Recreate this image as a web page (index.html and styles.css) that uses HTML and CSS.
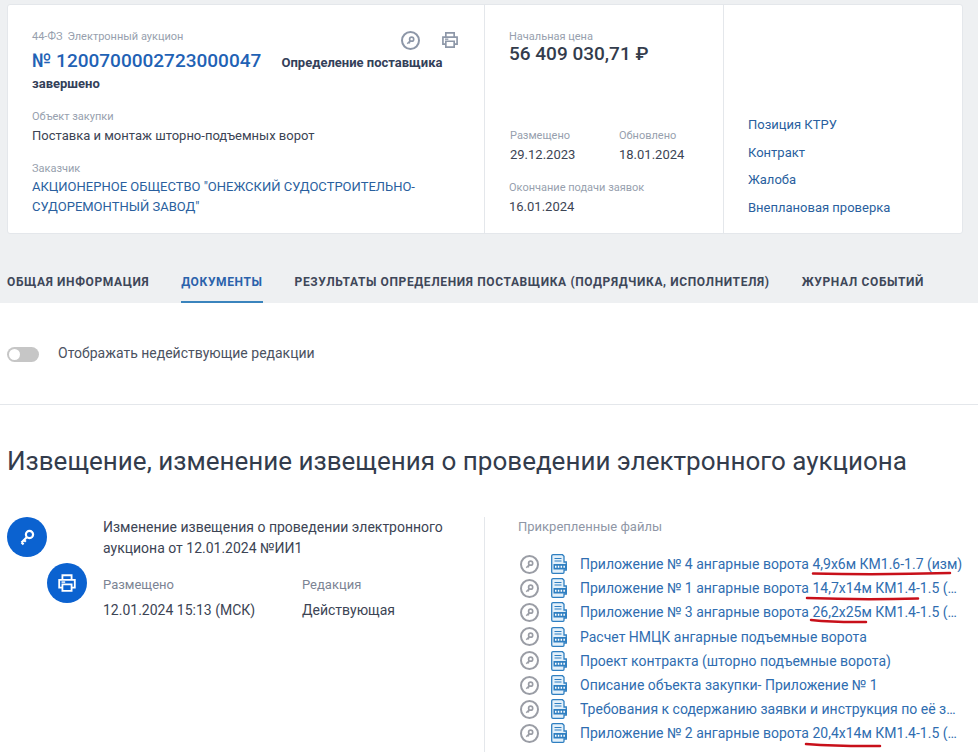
FILE: index.html
```html
<!DOCTYPE html>
<html>
<head>
  <title>Извещение</title>
  <link rel="stylesheet" href="styles.css">
</head>
<body>
  <svg width="0" height="0" class="defs">
    <symbol id="key" viewBox="0 0 24 24">
      <circle cx="14.500" cy="9.500" r="3.600" fill="none" stroke="currentColor" stroke-width="2.200"/>
      <path d="M12 12 L6.500 17.500 M6.500 17.500 L8.600 19.400 M9 15 L10.800 16.800" fill="none" stroke="currentColor" stroke-width="2.200"/>
    </symbol>
    <symbol id="key-bold" viewBox="0 0 24 24">
      <circle cx="14.500" cy="9" r="4.500" fill="none" stroke="currentColor" stroke-width="3.600"/>
      <path d="M11.500 12.500 L5 19 M8.500 15.500 L11 18" fill="none" stroke="currentColor" stroke-width="3.400"/>
    </symbol>
    <symbol id="printer" viewBox="0 0 24 24">
      <path d="M7 8V3.500h10V8M7 17H3.500V8.500h17V17H17M7 13.500h10v7H7z" fill="none" stroke="currentColor" stroke-width="2"/>
      <path d="M6 11h4" stroke="currentColor" stroke-width="1.600"/>
    </symbol>
    <symbol id="doc" viewBox="0 0 16 20">
      <path d="M2 .7h9.500L13 2.200V8h2.300v8H13v2.300a1 1 0 0 1-1 1H2a1.300 1.300 0 0 1-1.300-1.300V2A1.300 1.300 0 0 1 2 .7z" fill="#e3f0fa" stroke="#2f7fc1" stroke-width="1.300"/>
      <path d="M3.500 4.500h7M3.500 7h7" stroke="#2f7fc1" stroke-width="1.200"/>
      <rect x="2.500" y="10" width="13.500" height="5.500" fill="#2f7fc1"/>
      <path d="M4 12.800h1.500M6.800 12.800h1.500M9.600 12.800h1.500M12.400 12.800h1.500" stroke="#fff" stroke-width="2"/>
    </symbol>
  </svg>

  <div class="top">
    <div class="card">
      <div class="col-main">
        <div class="card-actions">
          <span class="round-key"><svg><use href="#key-bold"/></svg></span>
          <svg class="print-icon" width="20" height="20"><use href="#printer"/></svg>
        </div>
        <div class="small-label"><span class="law">44-ФЗ</span>Электронный аукцион</div>
        <div class="title-line">
          <a class="reg-number">№ 1200700002723000047</a>
          <b class="status">Определение поставщика завершено</b>
        </div>
        <div class="small-label object-label">Объект закупки</div>
        <div class="value">Поставка и монтаж шторно-подъемных ворот</div>
        <div class="small-label customer-label">Заказчик</div>
        <a class="customer">АКЦИОНЕРНОЕ ОБЩЕСТВО "ОНЕЖСКИЙ СУДОСТРОИТЕЛЬНО-СУДОРЕМОНТНЫЙ ЗАВОД"</a>
      </div>
      <div class="col-price">
        <div class="small-label">Начальная цена</div>
        <div class="price">56 409 030,71 ₽</div>
        <div class="dates">
          <div class="date-item">
            <div class="small-label">Размещено</div>
            <div class="value">29.12.2023</div>
          </div>
          <div class="date-item">
            <div class="small-label">Обновлено</div>
            <div class="value">18.01.2024</div>
          </div>
        </div>
        <div class="small-label end-label">Окончание подачи заявок</div>
        <div class="value">16.01.2024</div>
      </div>
      <div class="col-links">
        <a>Позиция КТРУ</a>
        <a>Контракт</a>
        <a>Жалоба</a>
        <a>Внеплановая проверка</a>
      </div>
    </div>
    <div class="tabs">
      <a class="tab">ОБЩАЯ ИНФОРМАЦИЯ</a>
      <a class="tab active">ДОКУМЕНТЫ</a>
      <a class="tab">РЕЗУЛЬТАТЫ ОПРЕДЕЛЕНИЯ ПОСТАВЩИКА (ПОДРЯДЧИКА, ИСПОЛНИТЕЛЯ)</a>
      <a class="tab">ЖУРНАЛ СОБЫТИЙ</a>
    </div>
  </div>

  <div class="toggle-row">
    <span class="toggle"></span>
    <span>Отображать недействующие редакции</span>
  </div>

  <h1>Извещение, изменение извещения о проведении электронного аукциона</h1>

  <div class="notice">
    <div class="notice-left">
      <div class="bubbles">
        <span class="bubble"><svg width="24" height="24"><use href="#key"/></svg></span>
        <span class="bubble second"><svg width="22" height="22"><use href="#printer"/></svg></span>
      </div>
      <div class="notice-info">
        <div class="notice-title">Изменение извещения о проведении электронного аукциона от 12.01.2024 №ИИ1</div>
        <div class="notice-meta">
          <div class="meta-placed">
            <div class="meta-label">Размещено</div>
            <div class="meta-value">12.01.2024 15:13 (МСК)</div>
          </div>
          <div>
            <div class="meta-label">Редакция</div>
            <div class="meta-value">Действующая</div>
          </div>
        </div>
      </div>
    </div>
    <div class="notice-files">
      <div class="files-label">Прикрепленные файлы</div>
      <div class="files">
        <div class="file">
          <span class="round-key small"><svg><use href="#key-bold"/></svg></span>
          <svg class="doc" width="16" height="20"><use href="#doc"/></svg>
          <a>Приложение № 4 ангарные ворота 4,9х6м КМ1.6-1.7 (изм)</a>
        </div>
        <div class="file">
          <span class="round-key small"><svg><use href="#key-bold"/></svg></span>
          <svg class="doc" width="16" height="20"><use href="#doc"/></svg>
          <a>Приложение № 1 ангарные ворота 14,7х14м КМ1.4-1.5 (изм)</a>
        </div>
        <div class="file">
          <span class="round-key small"><svg><use href="#key-bold"/></svg></span>
          <svg class="doc" width="16" height="20"><use href="#doc"/></svg>
          <a>Приложение № 3 ангарные ворота 26,2х25м КМ1.4-1.5 (изм)</a>
        </div>
        <div class="file">
          <span class="round-key small"><svg><use href="#key-bold"/></svg></span>
          <svg class="doc" width="16" height="20"><use href="#doc"/></svg>
          <a>Расчет НМЦК ангарные подъемные ворота</a>
        </div>
        <div class="file">
          <span class="round-key small"><svg><use href="#key-bold"/></svg></span>
          <svg class="doc" width="16" height="20"><use href="#doc"/></svg>
          <a>Проект контракта (шторно подъемные ворота)</a>
        </div>
        <div class="file">
          <span class="round-key small"><svg><use href="#key-bold"/></svg></span>
          <svg class="doc" width="16" height="20"><use href="#doc"/></svg>
          <a>Описание объекта закупки- Приложение № 1</a>
        </div>
        <div class="file">
          <span class="round-key small"><svg><use href="#key-bold"/></svg></span>
          <svg class="doc" width="16" height="20"><use href="#doc"/></svg>
          <a>Требования к содержанию заявки и инструкция по её заполнению</a>
        </div>
        <div class="file">
          <span class="round-key small"><svg><use href="#key-bold"/></svg></span>
          <svg class="doc" width="16" height="20"><use href="#doc"/></svg>
          <a>Приложение № 2 ангарные ворота 20,4х14м КМ1.4-1.5 (изм)</a>
        </div>
      </div>
    </div>
  </div>

  <!-- красные пометки поверх страницы -->
  <svg class="marks" width="978" height="752">
    <path d="M813 573.500 Q880 575 950 573"/>
    <path d="M807 598 Q860 600 918 598.500"/>
    <path d="M811 620 Q835 622.500 866 622"/>
    <path d="M806 744 Q840 746.500 880 746"/>
  </svg>
</body>
</html>
```

FILE: styles.css
```css
* { box-sizing: border-box; }
body {
  margin: 0;
  background: #fff;
  color: #334059;
  font-family: Roboto, "Liberation Sans", sans-serif;
  font-size: 13px;
  height: 752px;
  overflow: hidden;
  position: relative;
}
a { color: #1f5fae; text-decoration: none; }
.defs { position: absolute; }
.top {
  background: #eef0f2;
  height: 303px;
  padding: 4px 15px 0 7px;
}
.card {
  display: flex;
  height: 230px;
  background: #fff;
  border: 1px solid #e4e7eb;
  border-radius: 3px;
}
.col-main {
  position: relative;
  width: 477px;
  padding: 24px 24px 0 24px;
  border-right: 1px solid #e4e7eb;
}
.col-price {
  width: 239px;
  padding: 24px 0 0 24px;
  border-right: 1px solid #e4e7eb;
}
.col-links {
  flex: 1;
  display: flex;
  flex-direction: column;
  justify-content: flex-end;
  padding: 0 0 12px 24px;
}
.col-links a {
  height: 27.500px;
  line-height: 27px;
  font-size: 13px;
  color: #2a5f9e;
}
.small-label {
  font-size: 11px;
  line-height: 16px;
  color: #979fae;
}
.law { margin-right: 5px; }
.card-actions {
  position: absolute;
  top: 25px;
  right: 24px;
  display: flex;
  align-items: center;
  gap: 20px;
  color: #8d97a8;
}
.round-key {
  display: flex;
  align-items: center;
  justify-content: center;
  width: 19px;
  height: 19px;
  border: 2px solid #8d97a8;
  border-radius: 50%;
  color: #8d97a8;
}
.round-key svg { width: 11px; height: 11px; }
.title-line {
  line-height: 20px;
  margin-top: 2px;
  width: 430px;
}
.reg-number {
  font-size: 19px;
  font-weight: 500;
  line-height: 27px;
  color: #1f62b5;
  margin-right: 17px;
}
.status {
  font-size: 13px;
  font-weight: 700;
  color: #334059;
}
.object-label { margin-top: 15px; }
.value {
  font-size: 13px;
  line-height: 21px;
  color: #3c4454;
}
.customer-label { margin-top: 15px; }
.customer {
  display: block;
  font-size: 13px;
  line-height: 20px;
  color: #2a5f9e;
  width: 420px;
}
.price {
  font-size: 19px;
  font-weight: 500;
  line-height: 18px;
  color: #333c4c;
}
.dates {
  display: flex;
  margin-top: 65px;
  padding-left: 1px;
}
.date-item { flex: none; width: 109px; }
.end-label { margin-top: 15px; }
.tabs {
  display: flex;
  gap: 32px;
  height: 69px;
  padding-top: 30px;
}
.tab {
  height: 39px;
  font-size: 12px;
  font-weight: 700;
  line-height: 36px;
  letter-spacing: 0.62px;
  color: #3e4759;
  white-space: nowrap;
}
.tab.active {
  color: #2a62ab;
  border-bottom: 2px solid #3a84bd;
}
.toggle-row {
  display: flex;
  align-items: center;
  gap: 19px;
  height: 102px;
  padding: 0 0 2px 7px;
  border-bottom: 1px solid #e4e7eb;
  font-size: 14px;
  color: #4b5261;
}
.toggle {
  position: relative;
  width: 32px;
  height: 15px;
  margin-top: 3px;
  border-radius: 8px;
  background: #c6c6c6;
}
.toggle::before {
  content: "";
  position: absolute;
  left: 2px;
  top: 2px;
  width: 11px;
  height: 11px;
  border-radius: 50%;
  background: #fff;
}
h1 {
  margin: 36px 0 0 7px;
  font-size: 26px;
  font-weight: 400;
  line-height: 40px;
  color: #333c4c;
}
.notice {
  display: flex;
  margin: 36px 0 0 7px;
}
.notice-left {
  display: flex;
  width: 478px;
  height: 235px;
  border-right: 1px solid #e4e7eb;
}
.bubbles {
  width: 96px;
  flex: none;
}
.bubble {
  display: flex;
  align-items: center;
  justify-content: center;
  width: 40px;
  height: 40px;
  border-radius: 50%;
  background: #0b62d0;
  color: #fff;
}
.bubble.second { margin: 6px 0 0 40px; }
.notice-info { width: 350px; }
.notice-title {
  font-size: 14px;
  line-height: 21px;
  color: #3c4454;
}
.notice-meta {
  display: flex;
  margin-top: 16px;
}
.meta-placed { width: 199px; }
.meta-label {
  font-size: 13px;
  line-height: 20px;
  color: #7c8494;
}
.meta-value {
  margin-top: 5px;
  font-size: 14px;
  line-height: 20px;
  color: #3c4454;
}
.notice-files {
  width: 470px;
  padding: 1px 0 0 33px;
}
.files-label {
  font-size: 13px;
  line-height: 18px;
  color: #8f97a6;
}
.files { margin-top: 16px; }
.file {
  display: flex;
  align-items: center;
  height: 24.200px;
  width: 445px;
}
.round-key.small {
  flex: none;
  margin-left: 2px;
  border-color: #9a9da5;
  color: #9a9da5;
}
.doc { flex: none; margin-left: 12px; }
.file a {
  margin-left: 13px;
  font-size: 14px;
  color: #2f6db0;
  white-space: nowrap;
  overflow: hidden;
  text-overflow: ellipsis;
}
.marks {
  position: absolute;
  left: 0;
  top: 0;
  pointer-events: none;
}
.marks path {
  fill: none;
  stroke: #c8101a;
  stroke-width: 2.500;
  stroke-linecap: round;
}
```
